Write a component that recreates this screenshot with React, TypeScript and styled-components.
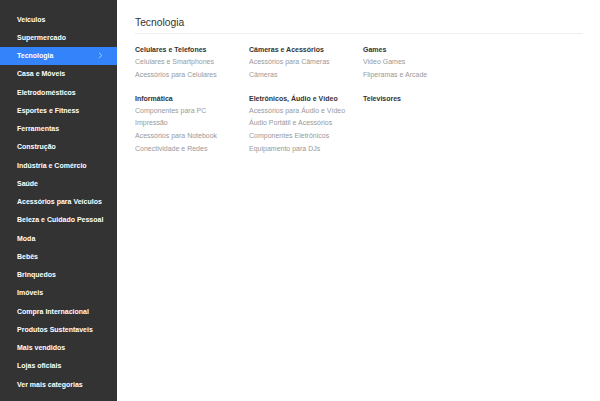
import React from "react";
import styled, { createGlobalStyle } from "styled-components";

const Global = createGlobalStyle`
  html, body { margin: 0; padding: 0; background: #fff; }
  body { font-family: "Liberation Sans", Arial, sans-serif; }
  #root { height: 401px; }
`;

const Page = styled.div`
  display: flex;
  width: 600px;
  height: 401px;
  overflow: hidden;
`;

const Sidebar = styled.nav`
  width: 117px;
  flex: none;
  background: #333333;
  padding-top: 10px;
  box-sizing: border-box;
  display: flex;
  flex-direction: column;
`;

const NavItem = styled.div<{ $active?: boolean }>`
  height: 18.25px;
  display: flex;
  align-items: center;
  justify-content: space-between;
  padding: 0 14px 0 17px;
  font-size: 7px;
  font-weight: 700;
  color: #fff;
  background: ${(p) => (p.$active ? "#3483fa" : "transparent")};
  white-space: nowrap;
`;

const Chevron = styled.svg`
  width: 5px;
  height: 7px;
`;

const Main = styled.main`
  flex: 1;
  padding: 16px 17px 0 18px;
  box-sizing: border-box;
`;

const Title = styled.h1`
  margin: 0;
  font-size: 10.3px;
  font-weight: 400;
  color: #333;
  line-height: 14px;
  padding-bottom: 3px;
  border-bottom: 1px solid #eeeeee;
`;

const Columns = styled.div`
  display: grid;
  grid-template-columns: repeat(3, 114px);
  margin-top: 9px;
`;

const Column = styled.div`
  display: flex;
  flex-direction: column;
  gap: 10px;
`;

const Group = styled.div`
  display: flex;
  flex-direction: column;
`;

const Heading = styled.div`
  font-size: 7px;
  font-weight: 700;
  color: #333;
  line-height: 13px;
  white-space: nowrap;
`;

const Link = styled.div`
  font-size: 7px;
  color: #999;
  line-height: 12.8px;
  white-space: nowrap;
`;

const navItems = [
  "Veículos",
  "Supermercado",
  "Tecnologia",
  "Casa e Móveis",
  "Eletrodomésticos",
  "Esportes e Fitness",
  "Ferramentas",
  "Construção",
  "Indústria e Comércio",
  "Saúde",
  "Acessórios para Veículos",
  "Beleza e Cuidado Pessoal",
  "Moda",
  "Bebês",
  "Brinquedos",
  "Imóveis",
  "Compra Internacional",
  "Produtos Sustentaveis",
  "Mais vendidos",
  "Lojas oficiais",
  "Ver mais categorias",
];

type G = { title: string; links: string[] };

const columns: G[][] = [
  [
    { title: "Celulares e Telefones", links: ["Celulares e Smartphones", "Acessórios para Celulares"] },
    {
      title: "Informática",
      links: ["Componentes para PC", "Impressão", "Acessórios para Notebook", "Conectividade e Redes"],
    },
  ],
  [
    { title: "Câmeras e Acessórios", links: ["Acessórios para Câmeras", "Câmeras"] },
    {
      title: "Eletrônicos, Áudio e Vídeo",
      links: [
        "Acessórios para Áudio e Vídeo",
        "Áudio Portátil e Acessórios",
        "Componentes Eletrônicos",
        "Equipamento para DJs",
      ],
    },
  ],
  [
    { title: "Games", links: ["Video Games", "Fliperamas e Arcade"] },
    { title: "Televisores", links: [] },
  ],
];

export default function App() {
  return (
    <>
      <Global />
      <Page>
        <Sidebar>
          {navItems.map((n) => (
            <NavItem key={n} $active={n === "Tecnologia"}>
              <span>{n}</span>
              {n === "Tecnologia" && (
                <Chevron viewBox="0 0 5 7">
                  <path d="M1 0.8 L3.8 3.5 L1 6.2" fill="none" stroke="rgba(255,255,255,0.7)" strokeWidth="0.8" />
                </Chevron>
              )}
            </NavItem>
          ))}
        </Sidebar>
        <Main>
          <Title>Tecnologia</Title>
          <Columns>
            {columns.map((col, i) => (
              <Column key={i}>
                {col.map((g) => (
                  <Group key={g.title}>
                    <Heading>{g.title}</Heading>
                    {g.links.map((l) => (
                      <Link key={l}>{l}</Link>
                    ))}
                  </Group>
                ))}
              </Column>
            ))}
          </Columns>
        </Main>
      </Page>
    </>
  );
}
